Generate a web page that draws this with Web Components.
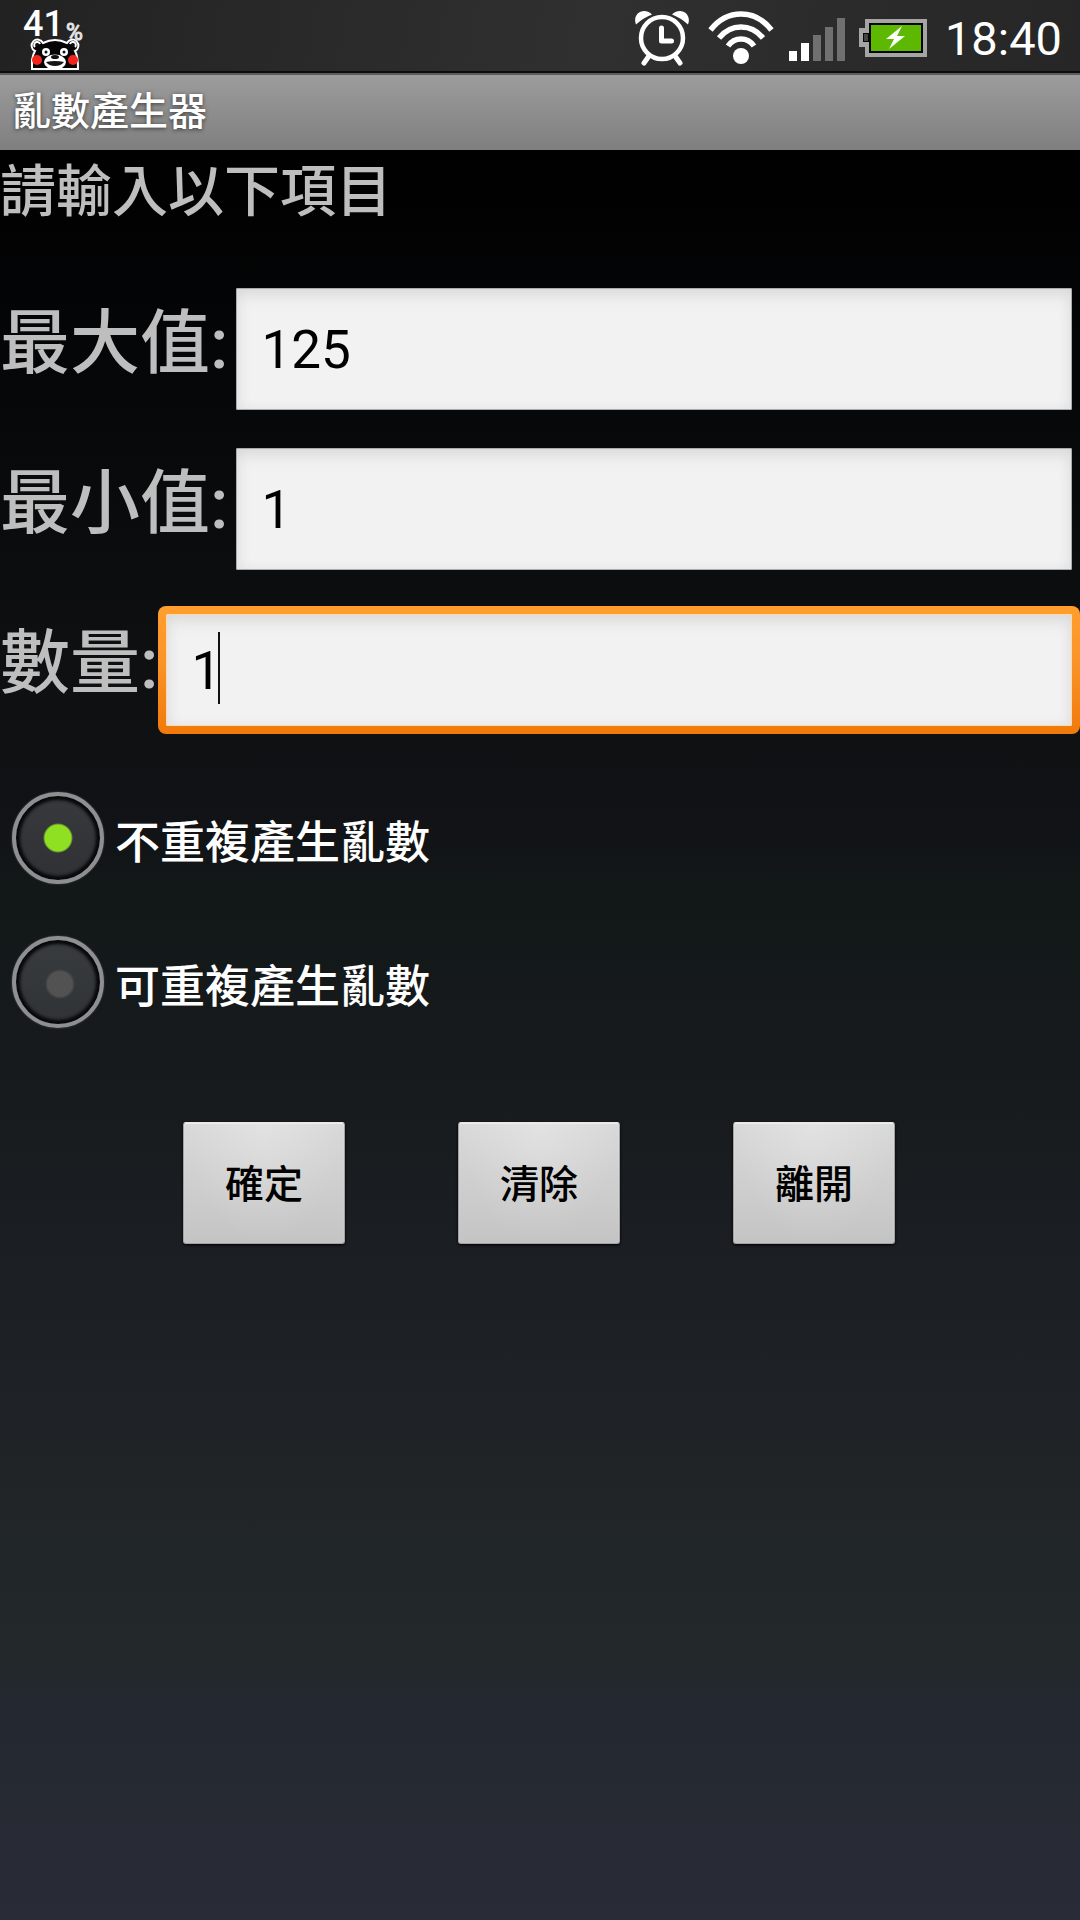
<!DOCTYPE html>
<html lang="zh-Hant">
<head>
<meta charset="utf-8">
<meta name="viewport" content="width=device-width, initial-scale=1">
<title>亂數產生器</title>
<style>
  body {
    margin: 0;
    min-height: 100vh;
    background: #000 linear-gradient(#000 8%, #060709 20%, #0e1011 35%, #111215 42%, #121718 46%, #171b1d 57%, #1b1e23 65%, #1e2226 72%, #23282a 86%, #242831 89%, #292c36);
    color: #bebebe;
    font-family: Roboto, "Noto Sans CJK TC", sans-serif;
  }
</style>
</head>
<body>
  <status-bar time="18:40" battery="41"></status-bar>
  <title-bar>亂數產生器</title-bar>
  <random-form>
    <span slot="heading">請輸入以下項目</span>
    <number-field label="最大值:" value="125"></number-field>
    <number-field label="最小值:" value="1"></number-field>
    <number-field label="數量:" value="1" active></number-field>
    <radio-choices slot="choices" options="不重複產生亂數,可重複產生亂數"></radio-choices>
    <push-button slot="actions">確定</push-button>
    <push-button slot="actions">清除</push-button>
    <push-button slot="actions">離開</push-button>
  </random-form>

<script>
const StatusBarTemplate = document.createElement('template');

StatusBarTemplate.innerHTML = `
    <style>
        :host {
          display: flex;
          align-items: flex-start;
          justify-content: space-between;
          box-sizing: border-box;
          height: 73px;
          padding: 0 18px 0 20px;
          background: linear-gradient(100deg, #222, #303030 55%, #262626);
          border-bottom: 2px solid #0c0c0c;
          color: #fff;
        }

        svg {
          display: block;
        }

        .right {
          display: flex;
          align-items: flex-start;
          gap: 14px;
        }

        time {
          font-size: 47px;
          line-height: 78px;
        }
    </style>

    <svg class="level" width="70" height="71" viewBox="20 0 70 71">
      <text id="level" x="23" y="36" fill="#fff" font-family="Roboto, sans-serif" font-weight="500" font-size="36"></text>
      <text x="66" y="40" fill="#e4e4e4" stroke="#e4e4e4" font-family="Roboto, sans-serif" font-size="23">%</text>
      <path d="M32 69V60Q33 54 35 51A6 6 0 1 1 43 43Q55 37 67 43A6 6 0 1 1 75 51Q78 56 78 69Z" fill="#050505" stroke="#fff" stroke-width="2"/>
      <path d="M35 47a3 3 0 1 1 5-3M70 44a3 3 0 1 1 5 3" fill="#111" stroke="#fff" stroke-width="2"/>
      <circle cx="46" cy="52" r="4" fill="#fff"/><circle cx="64" cy="52" r="4" fill="#fff"/>
      <circle cx="46" cy="52" r="1.500" fill="#111"/><circle cx="64" cy="52" r="1.500" fill="#111"/>
      <ellipse cx="55" cy="62" rx="11" ry="7.500" fill="#fff"/>
      <ellipse cx="55" cy="57" rx="4" ry="2" fill="#111"/>
      <path d="M46 62Q55 60 64 62Q61 66 55 66Q49 66 46 62Z" fill="#151515"/>
      <circle cx="37" cy="60" r="5" fill="#f3241b"/><circle cx="73" cy="60" r="5" fill="#f3241b"/>
    </svg>

    <div class="right">
      <svg width="59" height="71" viewBox="633 0 59 71" fill="none" stroke="#fff">
        <circle cx="661" cy="38" r="21" stroke-width="4.500"/>
        <path d="M660.500 28v13h10" stroke-width="5" stroke-linecap="round" stroke-linejoin="round"/>
        <path d="M648 56l-5 7M674 56l5 7" stroke-width="5" stroke-linecap="round"/>
        <path d="M635 24.500C632 17 637 11 643 11Q648 11 651 14.500Q642 18 635 24.500ZM687 24.500C690 17 685 11 679 11Q674 11 671 14.500Q680 18 687 24.500Z" fill="#fff" stroke="none"/>
      </svg>
      <svg width="68" height="71" viewBox="706 0 68 71" fill="none" stroke="#fff" stroke-width="5.500">
        <circle cx="740" cy="56" r="8" fill="#fff" stroke="none"/>
        <path d="M709.500 30Q722 14 740 14T770.500 30"/>
        <path d="M718 38Q727 27 740 27T762 38"/>
        <path d="M727 46Q732 39 740 39T753 46"/>
      </svg>
      <svg width="56" height="71" viewBox="788 0 56 71">
        <path d="M788 51h8v10h-8zM800 43h8v18h-8z" fill="#fff"/>
        <path d="M812 35h8v26h-8zM824 27h8v34h-8zM836 18h8v43h-8z" fill="#707070"/>
      </svg>
      <svg width="72" height="71" viewBox="858 0 72 71">
        <path d="M864 19h62v38h-62V47h-6V28h6z" fill="#a5a5a5"/>
        <path d="M868 23h54v30h-54V42h-6V33h6z" fill="#050505"/>
        <path d="M863 34h4v7h-4z" fill="#444"/>
        <path d="M870 25h50v26h-50z" fill="#5cb800"/>
        <path d="M901 26L885 39h8l-5 10 16-13h-8z" fill="#fff"/>
      </svg>
      <time></time>
    </div>
`;

class StatusBar extends HTMLElement {
  constructor() {
    super();
    this.attachShadow({ mode: 'open' });
    this.shadowRoot.appendChild(StatusBarTemplate.content.cloneNode(true));
    this.shadowRoot.querySelector('time').textContent = this.getAttribute('time');
    this.shadowRoot.querySelector('#level').textContent = this.getAttribute('battery');
  }
}
window.customElements.define('status-bar', StatusBar);


const TitleBarTemplate = document.createElement('template');

TitleBarTemplate.innerHTML = `
    <style>
        :host {
          display: block;
          padding: 0 12px;
          border-top: 2px solid #5b5b5b;
          background: linear-gradient(#9c9c9c, #7f7f7f);
          color: #fff;
        }

        h1 {
          margin: 0;
          font-size: 39px;
          font-weight: 500;
          line-height: 75px;
          text-shadow: 0 1px 4px rgba(0, 0, 0, .6);
        }
    </style>

    <h1><slot></slot></h1>
`;

class TitleBar extends HTMLElement {
  constructor() {
    super();
    this.attachShadow({ mode: 'open' });
    this.shadowRoot.appendChild(TitleBarTemplate.content.cloneNode(true));
  }
}
window.customElements.define('title-bar', TitleBar);


const RandomFormTemplate = document.createElement('template');

RandomFormTemplate.innerHTML = `
    <style>
        :host {
          display: block;
        }

        h2 {
          margin: 0 0 52px;
          font-size: 56px;
          font-weight: 500;
          line-height: 84px;
        }

        .fields {
          display: grid;
          gap: 32px;
        }

        .actions {
          display: flex;
          justify-content: center;
          gap: 113px;
          margin-top: 92px;
          padding-right: 2px;
        }
    </style>

    <h2><slot name="heading"></slot></h2>
    <div class="fields"><slot></slot></div>
    <slot name="choices"></slot>
    <div class="actions"><slot name="actions"></slot></div>
`;

class RandomForm extends HTMLElement {
  constructor() {
    super();
    this.attachShadow({ mode: 'open' });
    this.shadowRoot.appendChild(RandomFormTemplate.content.cloneNode(true));
  }
}
window.customElements.define('random-form', RandomForm);


const NumberFieldTemplate = document.createElement('template');

NumberFieldTemplate.innerHTML = `
    <style>
        :host {
          display: flex;
          height: 128px;
        }

        label {
          font-size: 70px;
          font-weight: 500;
          line-height: 116px;
          white-space: nowrap;
        }

        .box {
          position: relative;
          flex: 1;
          min-width: 0;
          box-sizing: border-box;
          padding: 2px 8px 4px;
          font-size: 53px;
        }

        input {
          display: block;
          box-sizing: border-box;
          width: 100%;
          height: 100%;
          margin: 0;
          padding: 2px 24px 0;
          border: 1px solid #a9acac;
          border-radius: 1px;
          outline: 0;
          background: #f2f2f2;
          box-shadow: inset 0 8px 18px -4px #d6d6d6, inset 0 0 12px #e6e6e6;
          color: #000;
          font: inherit;
        }

        .caret {
          display: none;
          position: absolute;
          top: 26px;
          left: calc(30px + 1ch);
          width: 2px;
          height: 72px;
          background: #111;
        }

        :host([active]) .box {
          padding: 8px;
          border-radius: 8px;
          background: linear-gradient(#ff9e2d, #fb952a 40%, #f07a0a);
        }

        :host([active]) input {
          border-color: #fbd9ae;
        }

        :host([active]) .caret {
          display: block;
        }
    </style>

    <label for="field"></label>
    <div class="box">
      <input id="field" type="text" inputmode="numeric">
      <span class="caret"></span>
    </div>
`;

class NumberField extends HTMLElement {
  constructor() {
    super();
    this.attachShadow({ mode: 'open' });
    this.shadowRoot.appendChild(NumberFieldTemplate.content.cloneNode(true));
    this.shadowRoot.querySelector('label').textContent = this.getAttribute('label');
    this.shadowRoot.querySelector('input').value = this.getAttribute('value');
  }
}
window.customElements.define('number-field', NumberField);


const RadioChoicesTemplate = document.createElement('template');

RadioChoicesTemplate.innerHTML = `
    <style>
        :host {
          display: grid;
          gap: 48px;
          margin-top: 56px;
          padding-left: 12px;
          color: #fff;
        }

        .choice {
          display: flex;
          align-items: center;
          gap: 11px;
          height: 96px;
        }

        label {
          padding-top: 2px;
          font-size: 45px;
          font-weight: 500;
        }

        input {
          appearance: none;
          box-sizing: border-box;
          width: 92px;
          height: 92px;
          margin: 0;
          border: 4px solid #8e8f91;
          border-radius: 50%;
          background: radial-gradient(circle at 44px 44px, #525252 0 12px, #4a4b4c 13px, transparent 15px), linear-gradient(#383c3f, #2f3336);
          box-shadow: inset 0 0 3px 4px #08090a, 0 0 2px #555;
        }

        input:checked {
          background: radial-gradient(circle at 42px 42px, #8fdf22 0 13px, transparent 15px), linear-gradient(#38393c, #303134);
        }
    </style>
`;

class RadioChoices extends HTMLElement {
  constructor() {
    super();
    this.attachShadow({ mode: 'open' });
    this.shadowRoot.appendChild(RadioChoicesTemplate.content.cloneNode(true));

    // both radios share this root so that they form one group
    this.getAttribute('options').split(',').forEach((text, i) => {
      const choice = document.createElement('div');
      choice.className = 'choice';
      choice.innerHTML = `<input type="radio" name="mode" id="mode${i}"><label for="mode${i}"></label>`;
      choice.querySelector('input').checked = i === 0;
      choice.querySelector('label').textContent = text;
      this.shadowRoot.appendChild(choice);
    });
  }
}
window.customElements.define('radio-choices', RadioChoices);


const PushButtonTemplate = document.createElement('template');

PushButtonTemplate.innerHTML = `
    <style>
        :host {
          display: block;
        }

        button {
          display: block;
          width: 162px;
          height: 122px;
          padding: 0 0 4px;
          border: 1px solid #a0a2a3;
          border-top-color: #e8e8e8;
          border-radius: 3px;
          background: radial-gradient(ellipse at 50% 0, rgba(255, 255, 255, .25), transparent 70%), linear-gradient(#d9d9d9, #c4c4c4);
          box-shadow: inset 0 1px 1px #eee, 0 1px 3px #000;
          color: #000;
          font-family: inherit;
          font-size: 39px;
          font-weight: 500;
        }
    </style>

    <button type="button"><slot></slot></button>
`;

class PushButton extends HTMLElement {
  constructor() {
    super();
    this.attachShadow({ mode: 'open' });
    this.shadowRoot.appendChild(PushButtonTemplate.content.cloneNode(true));
  }
}
window.customElements.define('push-button', PushButton);
</script>
</body>
</html>
